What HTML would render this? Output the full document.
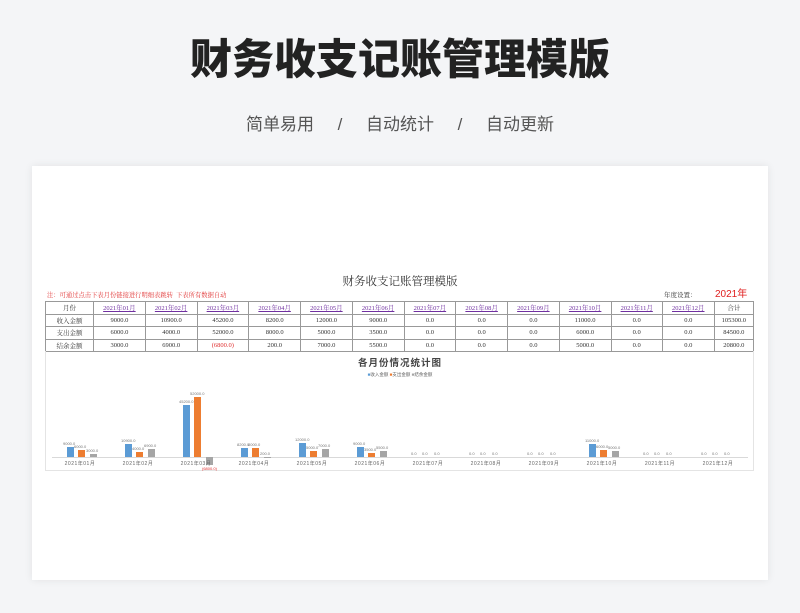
<!DOCTYPE html>
<html><head><meta charset="utf-8">
<style>
*{margin:0;padding:0;box-sizing:border-box}
body{width:800px;height:613px;background:#f4f5f7;font-family:"Liberation Sans","Noto Sans CJK SC",sans-serif;position:relative;overflow:hidden}
.t{position:absolute;left:0;width:800px;text-align:center}
.card{position:absolute;left:32px;top:166px;width:736px;height:414px;background:#fff;box-shadow:0 0 8px rgba(0,0,0,.08)}
table{position:absolute;left:45px;top:301px;width:709px;border-collapse:collapse;font-family:"Liberation Serif","Noto Serif CJK SC",serif;font-size:6.5px;color:#333}
td{border:1px solid #999;height:12.5px;text-align:center;padding:0}
td.l{color:#7030a0;text-decoration:underline}
.a{position:absolute}
.b{position:absolute;width:7px}
.bl{background:#5b9bd5}.or{background:#ed7d31}.gr{background:#a5a5a5}
.v{position:absolute;font-size:4px;color:#777;white-space:nowrap}
.m{position:absolute;font-size:5px;color:#666;top:460px;width:58px;text-align:center;letter-spacing:.5px}
</style></head><body>
<div class="t" style="top:34px;font-size:42px;font-weight:900;color:#222;line-height:52px">财务收支记账管理模版</div>
<div class="t" style="top:113px;font-size:17px;color:#555;line-height:24px">简单易用&nbsp;&nbsp;&nbsp;&nbsp;&nbsp;/&nbsp;&nbsp;&nbsp;&nbsp;&nbsp;自动统计&nbsp;&nbsp;&nbsp;&nbsp;&nbsp;/&nbsp;&nbsp;&nbsp;&nbsp;&nbsp;自动更新</div>
<div class="card"></div>
<div class="a" style="left:0;width:800px;text-align:center;top:273px;font-size:11.5px;color:#333;font-family:'Liberation Serif','Noto Serif CJK SC',serif">财务收支记账管理模版</div>
<div class="a" style="left:47px;top:290px;font-size:6.3px;color:#e03030;font-family:'Liberation Serif','Noto Serif CJK SC',serif">注：可通过点击下表月份链接进行明细表跳转&nbsp;&nbsp;下表所有数据自动</div>
<div class="a" style="left:664px;top:290px;font-size:6.5px;color:#333;font-family:'Liberation Serif','Noto Serif CJK SC',serif">年度设置：</div>
<div class="a" style="left:715px;top:285px;font-size:10px;color:#e02020">2021年</div>
<table>
<tr><td style="width:48px">月份</td><td class="l">2021年01月</td><td class="l">2021年02月</td><td class="l">2021年03月</td><td class="l">2021年04月</td><td class="l">2021年05月</td><td class="l">2021年06月</td><td class="l">2021年07月</td><td class="l">2021年08月</td><td class="l">2021年09月</td><td class="l">2021年10月</td><td class="l">2021年11月</td><td class="l">2021年12月</td><td>合计</td></tr>
<tr><td>收入金额</td><td>9000.0</td><td>10900.0</td><td>45200.0</td><td>8200.0</td><td>12000.0</td><td>9000.0</td><td>0.0</td><td>0.0</td><td>0.0</td><td>11000.0</td><td>0.0</td><td>0.0</td><td>105300.0</td></tr>
<tr><td>支出金额</td><td>6000.0</td><td>4000.0</td><td>52000.0</td><td>8000.0</td><td>5000.0</td><td>3500.0</td><td>0.0</td><td>0.0</td><td>0.0</td><td>6000.0</td><td>0.0</td><td>0.0</td><td>84500.0</td></tr>
<tr><td>结余金额</td><td>3000.0</td><td>6900.0</td><td style="color:#e03030">(6800.0)</td><td>200.0</td><td>7000.0</td><td>5500.0</td><td>0.0</td><td>0.0</td><td>0.0</td><td>5000.0</td><td>0.0</td><td>0.0</td><td>20800.0</td></tr>
</table>
<div class="a" style="left:45px;top:351px;width:709px;height:120px;border:1px solid #e4e4e4;border-top:none"></div>
<div class="a" style="left:0;width:800px;text-align:center;top:355px;font-size:9.5px;font-weight:bold;color:#444;letter-spacing:1px">各月份情况统计图</div>
<div class="a" style="left:0;width:800px;text-align:center;top:372px;font-size:4.5px;color:#666"><span style="color:#5b9bd5">■</span>收入金额 <span style="color:#ed7d31">■</span>支出金额 <span style="color:#a5a5a5">■</span>结余金额</div>
<div class="a" style="left:52px;top:457px;width:696px;height:1px;background:#d9d9d9"></div>
<div id="ch"></div>
<script>
var inc=[9000,10900,45200,8200,12000,9000,0,0,0,11000,0,0],exp=[6000,4000,52000,8000,5000,3500,0,0,0,6000,0,0],bal=[3000,6900,-6800,200,7000,5500,0,0,0,5000,0,0];
var s=60/52000,h='',B=457;
function f(v){return v<0?'('+(-v).toFixed(1)+')':v.toFixed(1)}
for(var i=0;i<12;i++){var c=80+58*i;
[[inc,'bl',-13],[exp,'or',-2],[bal,'gr',10]].forEach(function(p){var v=p[0][i],x=c+p[2],hh=Math.abs(v)*s;
if(v>=0){h+='<div class="b '+p[1]+'" style="left:'+x+'px;top:'+(B-hh)+'px;height:'+hh+'px"></div>';
h+='<div class="v" style="left:'+(x-4)+'px;top:'+(B-hh-6)+'px">'+f(v)+'</div>';}
else{h+='<div class="b '+p[1]+'" style="left:'+x+'px;top:'+B+'px;height:'+hh+'px"></div>';
h+='<div class="v" style="left:'+(x-4)+'px;top:'+(B+hh+1)+'px;color:#e03030">'+f(v)+'</div>';}
});
h+='<div class="m" style="left:'+(c-29)+'px">2021年'+(i<9?'0':'')+(i+1)+'月</div>';}
document.getElementById('ch').innerHTML=h;
</script>
</body></html>
